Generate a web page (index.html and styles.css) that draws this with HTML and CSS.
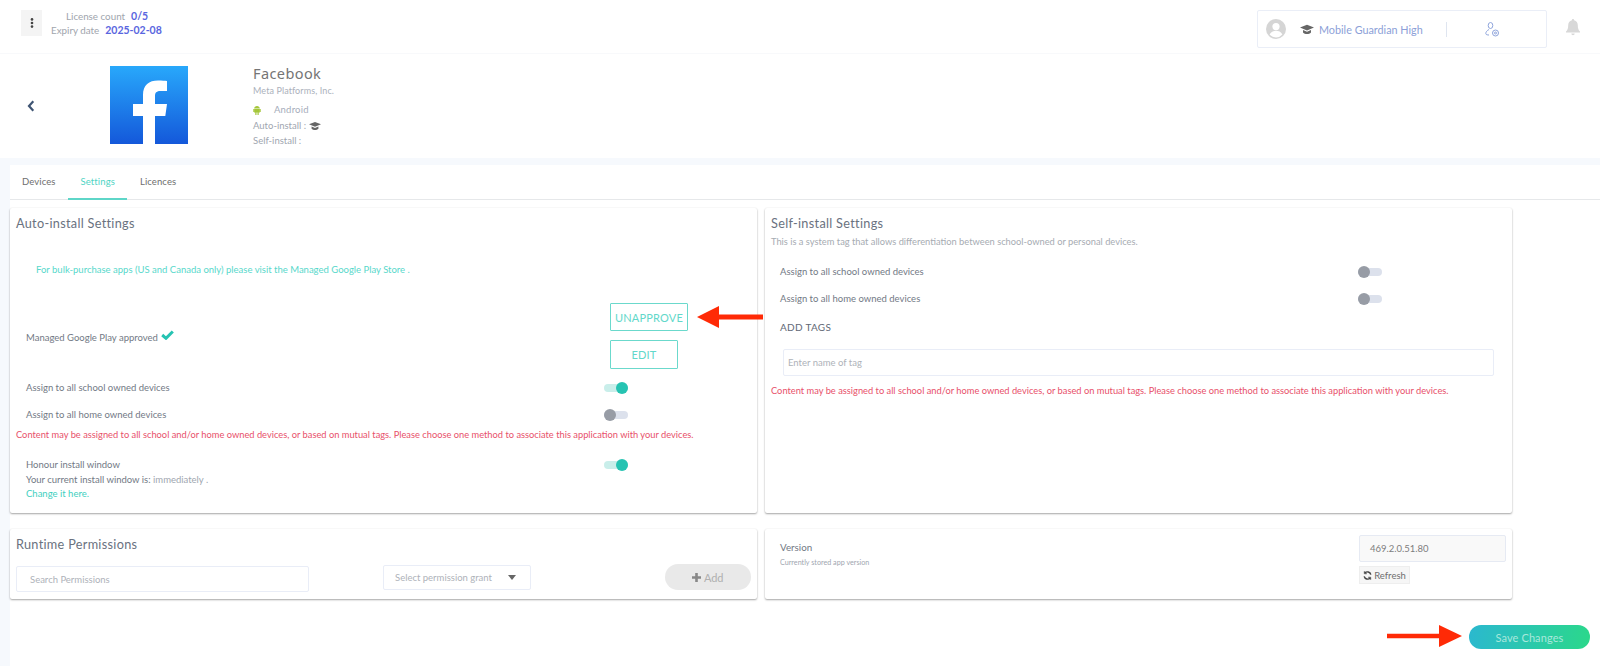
FILE: index.html
```html
<!DOCTYPE html>
<html lang="en">
<head>
<meta charset="utf-8">
<title>Facebook - Settings</title>
<link rel="stylesheet" href="styles.css">
</head>
<body>
<header class="topbar">
  <div class="topbar-left">
    <button class="menu-btn" aria-label="Menu">
      <svg width="4" height="10" viewBox="0 0 4 10"><circle cx="2" cy="1.4" r="1.3"/><circle cx="2" cy="5" r="1.3"/><circle cx="2" cy="8.6" r="1.3"/></svg>
    </button>
    <div class="license">
      <div class="license-row"><span>License count</span><b>0/5</b></div>
      <div class="license-row"><span>Expiry date</span><b>2025-02-08</b></div>
    </div>
  </div>
  <div class="topbar-right">
    <div class="account">
      <svg class="avatar" width="20" height="20" viewBox="0 0 20 20"><circle cx="10" cy="10" r="10" fill="#d5d5d5"/><circle cx="10" cy="7.6" r="3.6" fill="#fff"/><path d="M3.6 15.6c1.4-2.8 3.800-3.800 6.400-3.800s5 1 6.400 3.800A8.400 8.400 0 0 1 10 18.500a8.400 8.400 0 0 1-6.400-2.900z" fill="#fff"/></svg>
      <svg class="cap" width="14" height="11" viewBox="0 0 14 11"><path d="M7 .8 0 3.600l7 2.800 7-2.800zM3 6.100v2.500c1 1 2.500 1.500 4 1.500s3-.5 4-1.500V6.100L7 7.700z" fill="#666"/></svg>
      <span class="school">Mobile Guardian High</span>
      <span class="divider"></span>
      <svg class="usercog" width="15" height="15" viewBox="0 0 15 15" fill="none" stroke="#8ea4dc" stroke-width="1"><ellipse cx="5.500" cy="3.500" rx="2.300" ry="3"/><path d="M4 7.500C2 8.500.8 10 .8 11.500c0 1.200 1.500 1.500 3.200 1.500"/><circle cx="10.500" cy="11" r="3"/><circle cx="10.500" cy="11" r="1"/></svg>
    </div>
    <svg class="bell" width="14" height="17" viewBox="0 0 14 17"><path d="M7 0c-.7 0-1.100.5-1.100 1.200C3.500 1.800 2.200 3.800 2.200 6.200c0 3.300-.7 4.800-2.200 6.300v1h14v-1c-1.500-1.500-2.200-3-2.200-6.300 0-2.400-1.300-4.400-3.700-5C8.100.5 7.700 0 7 0zM5.300 14.500a1.700 1.700 0 0 0 3.400 0z" fill="#d8d8d8"/></svg>
  </div>
</header>

<section class="apphead">
  <svg class="back" width="8" height="12" viewBox="0 0 8 12"><path d="M6.300 1.300 2 6l4.300 4.700" fill="none" stroke="#3f5573" stroke-width="2.200"/></svg>
  <svg class="fb" width="78" height="78" viewBox="0 0 78 78">
    <defs><linearGradient id="fbg" x1="0" y1="0" x2="0" y2="1"><stop offset="0" stop-color="#28a8fb"/><stop offset="1" stop-color="#1458da"/></linearGradient></defs>
    <rect width="78" height="78" fill="url(#fbg)"/>
    <path d="M33 78V50H23V38h10v-9c0-10 6-14.500 15-14.500 4 0 7 .3 9 .5v10h-6.500c-4.800 0-5.500 2.300-5.500 5.500V38H57l-1.700 12H45v28z" fill="#fff"/>
  </svg>
  <div class="appinfo">
    <h1>Facebook</h1>
    <div class="vendor">Meta Platforms, Inc.</div>
    <div class="platform">
      <svg width="8" height="9" viewBox="0 0 8 9"><path d="M4 0C2.500 0 1.300.9 1.100 2.400h5.800C6.700.9 5.500 0 4 0zM1.100 2.900h5.800v3.700H5.700V9H4.500V6.600h-1V9H2.300V6.600H1.100zM0 2.900h.7v3H0zM7.300 2.900H8v3h-.7z" fill="#a4c639"/></svg>
      <span>Android</span>
    </div>
    <div class="install">Auto-install : <svg width="12" height="10" viewBox="0 0 14 11"><path d="M7 .8 0 3.600l7 2.800 7-2.800zM3 6.100v2.500c1 1 2.500 1.500 4 1.500s3-.5 4-1.500V6.100L7 7.700z" fill="#666"/></svg></div>
    <div class="install">Self-install :</div>
  </div>
</section>

<main class="main">
  <nav class="tabs">
    <a class="tab">Devices</a>
    <a class="tab active">Settings</a>
    <a class="tab">Licences</a>
  </nav>
  <div class="cards">
    <section class="card auto">
      <h2>Auto-install Settings</h2>
      <p class="bulk">For bulk-purchase apps (US and Canada only) please visit the Managed Google Play Store .</p>
      <div class="approved">
        <div class="approved-label">Managed Google Play approved
          <svg width="13" height="10" viewBox="0 0 13 10"><path d="M1.200 5 5 8.300 11.800 1.500" fill="none" stroke="#26c3b2" stroke-width="3"/></svg>
        </div>
        <div class="approved-btns">
          <button class="outline">UNAPPROVE</button>
          <button class="outline edit">EDIT</button>
        </div>
      </div>
      <div class="row first"><span>Assign to all school owned devices</span><i class="toggle on"></i></div>
      <div class="row"><span>Assign to all home owned devices</span><i class="toggle"></i></div>
      <p class="warn">Content may be assigned to all school and/or home owned devices, or based on mutual tags. Please choose one method to associate this application with your devices.</p>
      <div class="row honour"><span>Honour install window</span><i class="toggle on"></i></div>
      <div class="window">Your current install window is: <em>immediately .</em></div>
      <a class="change">Change it here.</a>
    </section>
    <section class="card self">
      <h2>Self-install Settings</h2>
      <p class="sub">This is a system tag that allows differentiation between school-owned or personal devices.</p>
      <div class="row self-row first"><span>Assign to all school owned devices</span><i class="toggle"></i></div>
      <div class="row self-row"><span>Assign to all home owned devices</span><i class="toggle"></i></div>
      <div class="addtags">ADD TAGS</div>
      <div class="field tagfield">Enter name of tag</div>
      <p class="warn">Content may be assigned to all school and/or home owned devices, or based on mutual tags. Please choose one method to associate this application with your devices.</p>
    </section>
    <section class="card perms">
      <h2>Runtime Permissions</h2>
      <div class="perm-row">
        <div class="field search">Search Permissions</div>
        <div class="field select">Select permission grant
          <svg width="8" height="5" viewBox="0 0 8 5"><path d="M0 0h8L4 5z" fill="#666"/></svg>
        </div>
        <button class="add"><svg width="9" height="9" viewBox="0 0 9 9"><path d="M3.200 0h2.600v3.200H9v2.600H5.800V9H3.200V5.800H0V3.200h3.200z" fill="#888"/></svg> Add</button>
      </div>
    </section>
    <section class="card version">
      <div class="ver-text">
        <div class="ver-title">Version</div>
        <div class="ver-sub">Currently stored app version</div>
      </div>
      <div class="ver-side">
        <div class="ver-value">469.2.0.51.80</div>
        <button class="refresh"><svg width="9" height="9" viewBox="0 0 10 10" fill="none" stroke="#444" stroke-width="1.600"><path d="M8.700 4A3.900 3.900 0 0 0 2 2.300M1.300 6A3.900 3.900 0 0 0 8 7.700"/><path d="M1.500 .3v2.700h2.700M8.500 9.700V7H5.800" stroke-width="1"/></svg> Refresh</button>
      </div>
    </section>
  </div>
  <div class="actions">
    <button class="save">Save Changes</button>
  </div>
</main>

<svg class="arrow arrow-a" width="66" height="22" viewBox="0 0 66 22"><path d="M0 11 22 0v8.500h44v5H22V22z" fill="#ff2a06"/></svg>
<svg class="arrow arrow-b" width="75" height="22" viewBox="0 0 75 22"><path d="M75 11 52 0v8.700H0v4.600h52V22z" fill="#ff2a06"/></svg>
</body>
</html>
```

FILE: styles.css
```css
* { box-sizing: border-box; }
html, body { margin: 0; padding: 0; }
body {
  width: 1600px;
  height: 666px;
  overflow: hidden;
  position: relative;
  background: #fff;
  font-family: "Lato", "Noto Sans", sans-serif;
  font-size: 9.5px;
  color: #727985;
}
button { font-family: inherit; cursor: pointer; }
h1, h2, p { margin: 0; font-weight: 400; }

.topbar {
  height: 54px;
  display: flex;
  justify-content: space-between;
  border-bottom: 1px solid #f8f9fb;
  padding: 10px 0 0 21px;
}
.topbar-left { display: flex; align-items: flex-start; }
.menu-btn {
  width: 21px; height: 26px;
  background: #f4f4f4;
  border: 0; padding: 0;
  display: flex; align-items: center; justify-content: center;
}
.menu-btn svg { fill: #444; }
.license { margin-left: 9px; margin-top: -1px; }
.license-row { display: flex; gap: 6px; height: 14px; line-height: 14px; color: #a0a5ad; font-size: 9.800px; align-items: baseline; }
.license-row:first-child { padding-left: 15px; }
.license-row b { color: #5a66e0; font-weight: 700; font-size: 10.500px; }

.topbar-right { display: flex; align-items: flex-start; }
.account {
  width: 290px; height: 38px;
  border: 1px solid #eaeef7;
  border-radius: 2px;
  display: flex; align-items: center;
  padding-left: 8px;
}
.avatar { flex: none; }
.cap { margin-left: 14px; flex: none; }
.school { margin-left: 5px; color: #8c9fd8; font-size: 10.800px; width: 127px; }
.divider { width: 1px; height: 15px; background: #dfe5f0; }
.usercog { margin-left: 38px; }
.bell { margin: 9px 20px 0 19px; }

.apphead {
  height: 104px;
  display: flex;
  align-items: center;
  position: relative;
}
.back { margin-left: 27px; }
.fb { margin: 0 0 2px 75px; flex: none; }
.appinfo { margin-left: 65px; width: 300px; align-self: flex-start; padding-top: 12px; }
.appinfo h1 { font-size: 14.500px; line-height: 15px; color: #757575; letter-spacing: .4px; font-family: "Noto Sans", sans-serif; }
.vendor { margin-top: 3px; color: #abb1bb; font-size: 9px; line-height: 13px; letter-spacing: .1px; }
.platform { margin-top: 7px; display: flex; align-items: center; gap: 13px; color: #a6adbb; font-size: 9.500px; line-height: 12px; letter-spacing: .2px; }
.install { color: #a0a6b0; font-size: 9.500px; line-height: 14.500px; display: flex; align-items: center; gap: 3px; }
.platform + .install { margin-top: 3px; }

.main {
  background: #f6f9fd;
  padding: 7px 0 0 10px;
  height: 508px;
}
.tabs {
  height: 35px;
  background: #fff;
  display: flex;
  border-bottom: 1px solid #e6e8ea;
}
.tab {
  padding: 0 12.500px;
  line-height: 33px;
  height: 35px;
  color: #6e6e6e;
  font-size: 9.500px;
  letter-spacing: .1px;
}
.tab:first-child { padding-left: 12px; }
.tab.active { color: #4fd4c4; border-bottom: 2px solid #5ed6c8; }
.cards {
  background: #fff;
  display: grid;
  grid-template-columns: 747px 747px;
  grid-template-rows: 305px 70px;
  column-gap: 8px;
  row-gap: 16px;
  padding-top: 8px;
  padding-right: 88px;
  width: 1590px;
}
.card {
  background: #fff;
  box-shadow: 0 1px 2px rgba(0,0,0,.35), 0 0 2px rgba(0,0,0,.06);
  border-radius: 2px;
}
.card h2 { font-size: 12.700px; color: #6a7280; line-height: 15px; letter-spacing: .3px; }

.auto { padding: 8px 0 0 6px; }
.bulk { margin: 32px 0 0 20px; color: #58d8cb; line-height: 14px; }
.approved { display: flex; margin-top: 26px; height: 66px; padding-left: 10px; align-items: center; }
.approved-label { width: 584px; }
.approved-label svg { vertical-align: 1px; margin-left: 1px; }
.approved-btns { display: flex; flex-direction: column; align-items: flex-start; gap: 9px; }
.outline {
  width: 78px; height: 28px;
  background: #fff;
  border: 1px solid #6bd9cc;
  border-radius: 1px;
  color: #62d8ca;
  font-size: 11px;
  letter-spacing: .2px;
  padding: 0;
}
.outline.edit { width: 68px; height: 29px; }
.row { display: flex; justify-content: space-between; height: 14px; line-height: 14px; align-items: center; width: 612px; padding-left: 10px; }
.row.first { margin-top: 12px; }
.row + .row { margin-top: 13px; }
.row span { flex: none; }
.toggle {
  display: block;
  width: 24px; height: 8px;
  border-radius: 4px;
  background: #dce1ec;
  position: relative;
}
.toggle::after {
  content: "";
  position: absolute;
  top: -2px; left: 0;
  width: 12px; height: 12px;
  border-radius: 50%;
  background: #979ca5;
}
.toggle.on { background: #c9eeea; }
.toggle.on::after { left: 12px; background: #26c3b2; }
.warn { color: #e8506a; line-height: 14px; font-size: 9.300px; }
.auto .warn { margin-top: 6px; }
.row.honour { margin-top: 16px; }
.window { padding-left: 10px; line-height: 14px; margin-top: 1px; }
.window em { font-style: normal; color: #a0a6b0; }
.change { display: block; padding-left: 10px; color: #42cfc0; line-height: 14px; }

.self { padding: 8px 6px 0 6px; }
.sub { color: #a6abb2; line-height: 14px; margin-top: 4px; font-size: 9.300px; }
.row.self-row { width: 611px; padding-left: 9px; }
.row.self-row.first { margin-top: 16px; }
.addtags { margin: 14px 0 0 9px; color: #5f6875; line-height: 14px; font-size: 10px; letter-spacing: .3px; }
.field {
  background: #fff;
  border: 1px solid #e9edf7;
  border-radius: 2px;
  color: #aeb2b9;
  display: flex;
  align-items: center;
}
.tagfield { margin: 15px 0 0 12px; width: 711px; height: 27px; padding-left: 4px; }
.self .warn { margin-top: 8px; }

.perms { padding: 8px 6px 0 6px; }
.perm-row { display: flex; align-items: flex-start; margin-top: 6px; }
.search { width: 293px; height: 26px; padding-left: 13px; margin-top: 8px; }
.select { width: 148px; height: 25px; margin: 7px 0 0 74px; padding: 0 14px 0 11px; justify-content: space-between; }
.add {
  width: 86px; height: 26px;
  margin: 6px 0 0 134px;
  border: 0;
  border-radius: 13px;
  background: #e9e9e9;
  color: #b0b0b0;
  font-size: 11px;
  padding: 0;
}

.version { display: flex; justify-content: space-between; padding: 6px 6px 0 15px; }
.ver-title { margin-top: 5px; line-height: 14px; font-size: 9.800px; }
.ver-sub { margin-top: 3px; color: #a0a6b0; font-size: 7.200px; line-height: 11px; }
.ver-side { width: 147px; display: flex; flex-direction: column; align-items: flex-start; }
.ver-value {
  width: 147px; height: 27px;
  background: #f9f9f9;
  border: 1px solid #e6eaf3;
  border-radius: 2px;
  padding-left: 10px;
  line-height: 25px;
  color: #7d7d7d;
}
.refresh {
  width: 51px; height: 18px;
  margin-top: 4px;
  border: 1px solid #eee;
  background: #f6f6f6;
  color: #6e6e6e;
  font-size: 9.500px;
  padding: 0;
  display: flex; align-items: center; justify-content: center; gap: 2px;
}

.actions { background: #fff; width: 1590px; height: 67px; padding: 26px 10px 0 0; display: flex; justify-content: flex-end; align-items: flex-start; }
.save {
  width: 121px; height: 24px;
  border: 0;
  border-radius: 12px;
  background: linear-gradient(100deg, #2bb8cf, #2bd88a);
  color: #a8e8dc;
  font-size: 11px;
  letter-spacing: .1px;
  padding: 0;
}
.arrow { position: absolute; }
.arrow-a { left: 697px; top: 306px; }
.arrow-b { left: 1387px; top: 625px; }
```
